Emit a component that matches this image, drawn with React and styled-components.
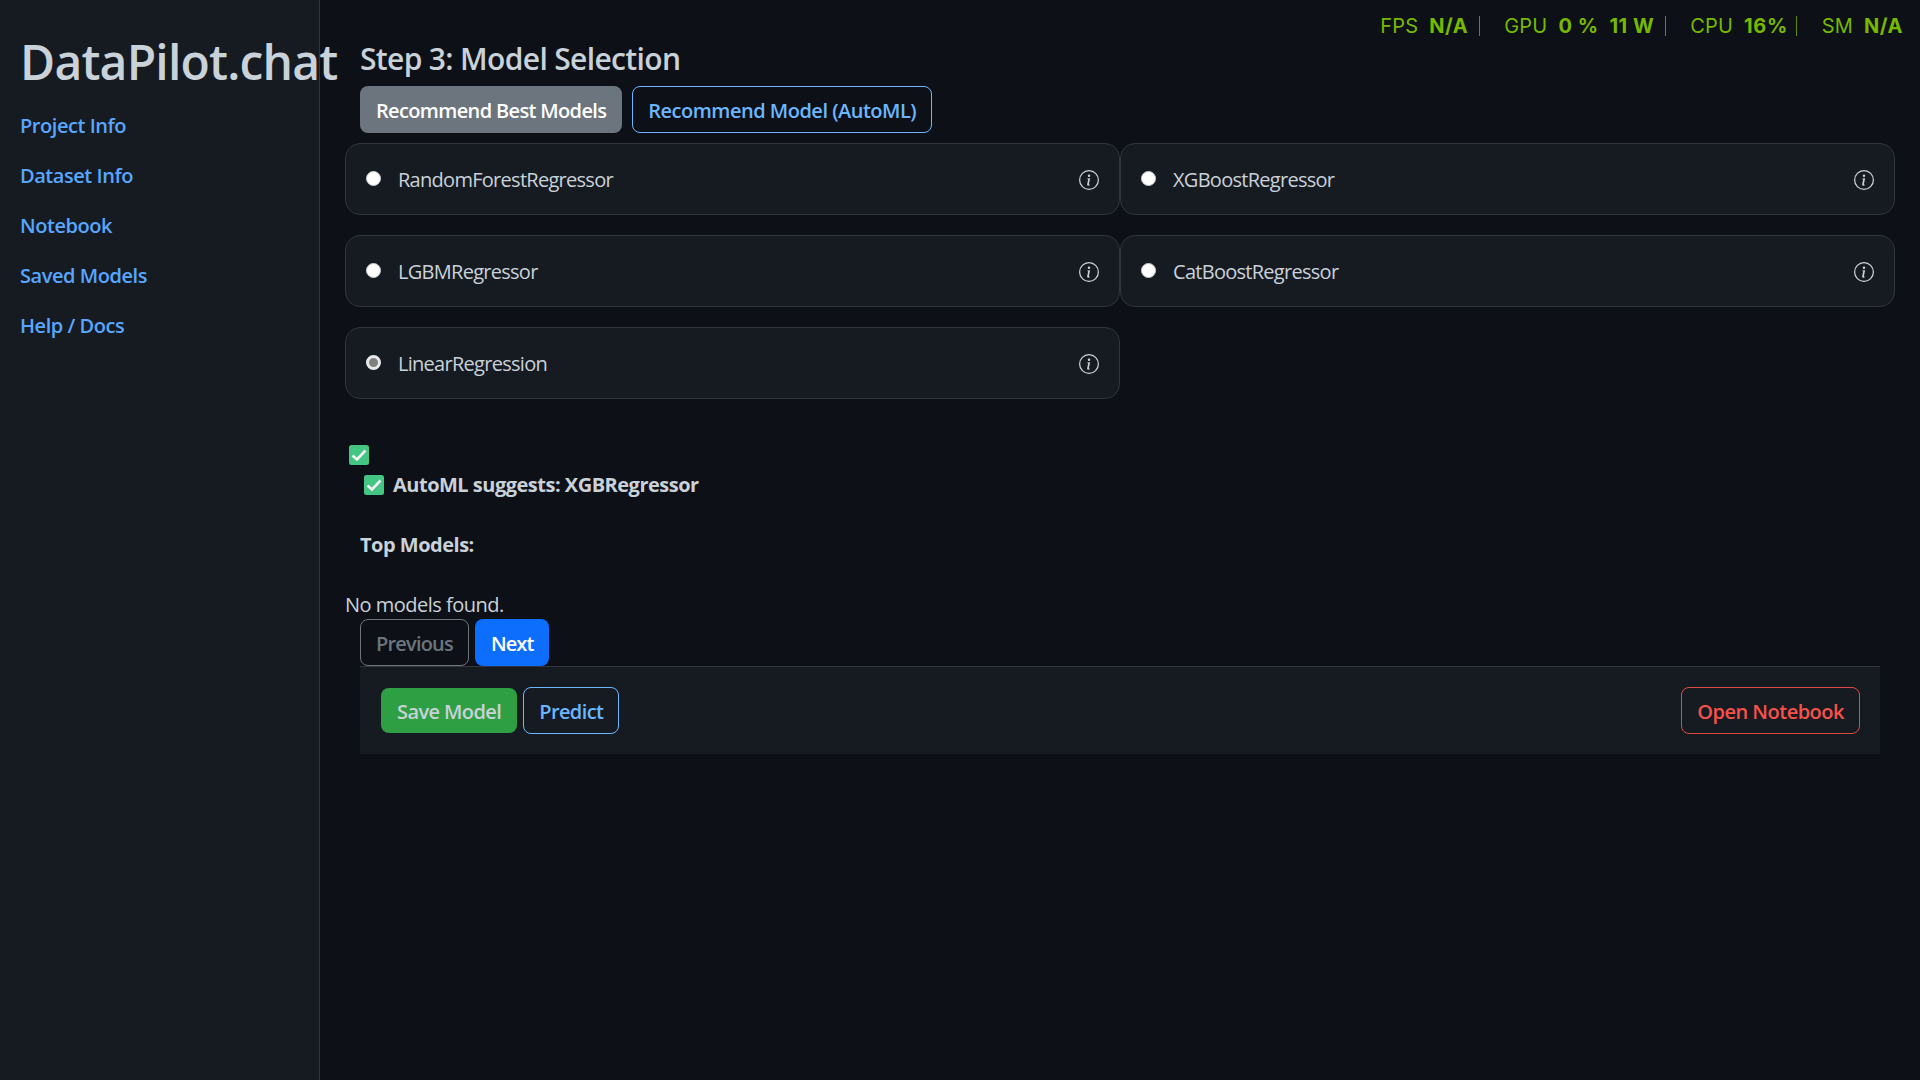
import React from "react";
import styled, { createGlobalStyle } from "styled-components";

const Global = createGlobalStyle`
  html, body { margin: 0; padding: 0; background: #0d1117; }
  body { font-family: "Open Sans", "Noto Sans", sans-serif; font-size: 20px; line-height: 30px; color: #c9d1d9; letter-spacing: -0.5px; }
  * { box-sizing: border-box; }
`;

const Page = styled.div`
  display: flex; width: 1920px; height: 1080px; overflow: hidden; position: relative; background: #0d1117;
`;
const Sidebar = styled.aside`
  width: 320px; flex: none; background: #161b22; border-right: 1px solid #30363d; padding: 30px 20px 0;
`;
const Brand = styled.div`
  font-size: 48px; line-height: 64px; font-weight: 600; color: #c9d1d9; white-space: nowrap; letter-spacing: -0.8px; margin-bottom: 17px; position: relative; z-index: 1;
`;
const NavList = styled.nav`
  display: flex; flex-direction: column; gap: 20px;
`;
const NavLink = styled.a`
  color: #58a6ff; font-weight: 600; font-size: 20px; line-height: 30px; display: block; letter-spacing: -0.45px;
`;
const Main = styled.main`
  flex: 1; padding: 35px 25px 0 25px; min-width: 0;
`;
const Heading = styled.h2`
  margin: 0 0 3px 15px; font-size: 30px; line-height: 48px; font-weight: 600; color: #c9d1d9; letter-spacing: -0.65px;
`;
const Row = styled.div`
  display: flex; gap: ${p => p.$gap || 10}px; margin-left: 15px;
`;
const Button = styled.button`
  font: inherit; font-weight: 600; letter-spacing: ${p => p.$ls ?? -0.6}px; height: ${p => p.$h || 47}px; padding: 3px 15px 0; border-radius: 8px; white-space: nowrap;
  border: 1px solid ${p => p.$border || "transparent"};
  background: ${p => p.$bg || "transparent"};
  color: ${p => p.$color || "#fff"};
`;
const Grid = styled.div`
  display: grid; grid-template-columns: 775px 775px; row-gap: 20px; margin-top: 10px;
`;
const Card = styled.div`
  height: 72px; display: flex; align-items: center; background: #161b22; border: 1px solid #30363d; border-radius: 15px; padding: 2px 20px 0;
`;
const Radio = styled.span`
  width: 15px; height: 15px; border-radius: 50%; background: ${p => p.$on ? "#808080" : "#fff"}; border: ${p => p.$on ? "3px solid #e8e8e8" : "1px solid #ccc"}; flex: none; margin-top: -4px;
`;
const CardLabel = styled.span`
  margin-left: 17px; flex: 1; color: #c9d1d9; font-size: 20px; letter-spacing: -0.72px;
`;
const Info = () => (
  <svg width="20" height="20" viewBox="0 0 16 16" fill="#c9d1d9">
    <path d="M8 15A7 7 0 1 1 8 1a7 7 0 0 1 0 14zm0 1A8 8 0 1 0 8 0a8 8 0 0 0 0 16z" />
    <path d="m8.93 6.588-2.29.287-.082.38.45.083c.294.07.352.176.288.469l-.738 3.468c-.194.897.105 1.319.808 1.319.545 0 1.178-.252 1.465-.598l.088-.416c-.2.176-.492.246-.686.246-.275 0-.375-.193-.304-.533L8.93 6.588zM9 4.5a1 1 0 1 1-2 0 1 1 0 0 1 2 0z" />
  </svg>
);
const Check = () => (
  <svg width="20" height="20" viewBox="0 0 20 20">
    <rect x="0" y="0" width="20" height="20" rx="2.5" fill="#45c583" />
    <path d="M3.5 10.5 8 14.5 16.5 5.5" fill="none" stroke="#f2f2f2" strokeWidth="2.6" />
  </svg>
);
const CheckAlone = styled.div`
  display: flex; height: 20px; margin: 46px 0 0 4px;
`;
const Suggest = styled.div`
  display: flex; align-items: center; gap: 9px; margin: 10px 0 0 19px; height: 20px; font-weight: 700; letter-spacing: -0.5px;
`;
const TopModels = styled.div`
  margin: 35px 0 0 15px; font-weight: 700; letter-spacing: -0.5px;
`;
const NoModels = styled.div`
  margin-top: 30px;
`;
const Pager = styled(Row)`
  margin-top: -1px; gap: 6px;
`;
const Footer = styled.div`
  display: flex; align-items: center; gap: 6px; margin-left: 15px; width: 1520px; height: 88px; padding: 0 20px 0 21px; background: #161b22; border-top: 1px solid #30363d;
`;
const Spacer = styled.div` flex: 1; `;
const Stats = styled.div`
  position: absolute; top: 16px; right: 6px; display: flex; align-items: center; color: #76b900; font-family: Inter, sans-serif; font-size: 20px; line-height: 30px; letter-spacing: 0.2px;
`;
const Stat = styled.span`
  display: flex; gap: 11px; margin-left: ${p => p.$wide ? 25 : 24}px; padding-right: ${p => p.$tight ? 8 : 11}px; border-right: ${p => p.$last ? "none" : "1px solid #5d8a0a"}; height: 20px; line-height: 20px; align-items: center; &:first-child { margin-left: 0; }
`;
const Strong = styled.b` font-weight: 700; letter-spacing: 0.5px; word-spacing: ${p => p.$narrow ? -5 : 0}px; `;

const models = ["RandomForestRegressor", "XGBoostRegressor", "LGBMRegressor", "CatBoostRegressor", "LinearRegression"];

export default function App() {
  return (
    <Page>
      <Global />
      <Sidebar>
        <Brand>DataPilot.chat</Brand>
        <NavList>
          {["Project Info", "Dataset Info", "Notebook", "Saved Models", "Help / Docs"].map(n => <NavLink key={n}>{n}</NavLink>)}
        </NavList>
      </Sidebar>
      <Main>
        <Heading>Step 3: Model Selection</Heading>
        <Row>
          <Button $bg="#6c757d" $ls={-0.65}>Recommend Best Models</Button>
          <Button $border="#6cb6ff" $color="#6cb6ff" $ls={-0.5}>Recommend Model (AutoML)</Button>
        </Row>
        <Grid>
          {models.map((m, i) => (
            <Card key={m}>
              <Radio $on={i === 4} />
              <CardLabel>{m}</CardLabel>
              <Info />
            </Card>
          ))}
        </Grid>
        <CheckAlone><Check /></CheckAlone>
        <Suggest><Check />AutoML suggests: XGBRegressor</Suggest>
        <TopModels>Top Models:</TopModels>
        <NoModels>No models found.</NoModels>
        <Pager>
          <Button $border="#6c757d" $color="#6c757d" $ls={-0.8}>Previous</Button>
          <Button $bg="#0d6efd" $ls={-0.9}>Next</Button>
        </Pager>
        <Footer>
          <Button $bg="#2ea043" $color="#c9d1d9" $h={45}>Save Model</Button>
          <Button $border="#6cb6ff" $color="#6cb6ff">Predict</Button>
          <Spacer />
          <Button $border="#dc4c46" $color="#f85149" $ls={-0.5}>Open Notebook</Button>
        </Footer>
      </Main>
      <Stats>
        <Stat>FPS <Strong>N/A</Strong></Stat>
        <Stat>GPU <Strong>0 %</Strong> <Strong>11 W</Strong></Stat>
        <Stat $tight>CPU <Strong $narrow>16 %</Strong></Stat>
        <Stat $last $wide>SM <Strong>N/A</Strong></Stat>
      </Stats>
    </Page>
  );
}
